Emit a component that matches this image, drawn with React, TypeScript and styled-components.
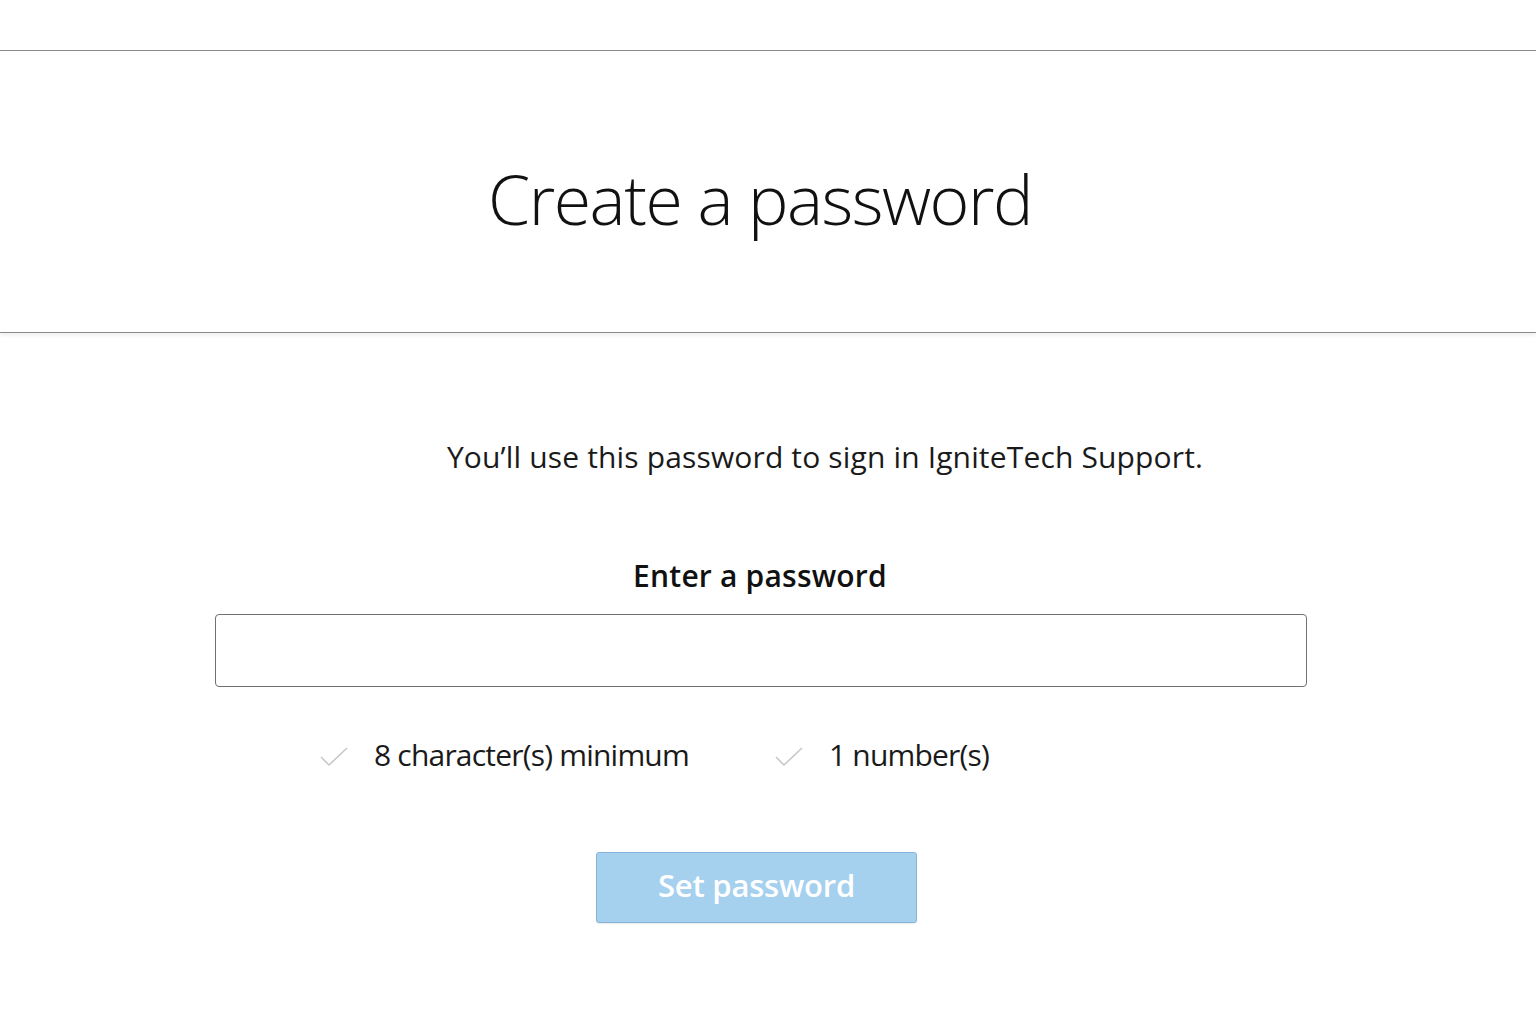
import React from "react";
import styled, { createGlobalStyle } from "styled-components";

const Global = createGlobalStyle`
  html, body { margin: 0; padding: 0; background: #ffffff; }
  body { font-family: "Open Sans", "Lato", sans-serif; color: #111; }
`;

const Page = styled.div`
  width: 1536px;
  min-height: 1024px;
  display: flex;
  flex-direction: column;
  align-items: stretch;
`;

const TopBar = styled.div`
  height: 50px;
  border-bottom: 1px solid #8a8a8a;
`;

const Hero = styled.header`
  height: 282px;
  border-bottom: 1px solid #8a8a8a;
  box-shadow: 0 3px 3px rgba(0, 0, 0, 0.05);
  display: flex;
  align-items: center;
  justify-content: center;
  box-sizing: border-box;
  padding-right: 16px;
`;

const Title = styled.h1`
  margin: 0;
  padding-top: 14px;
  font-family: "Open Sans", sans-serif;
  font-weight: 300;
  font-size: 68px;
  letter-spacing: -1.5px;
  color: #111;
`;

const Main = styled.main`
  display: flex;
  flex-direction: column;
  align-items: center;
  padding-top: 102px;
  padding-right: 16px;
`;

const Intro = styled.p`
  margin: 0 0 0 130px;
  font-size: 30px;
  letter-spacing: 0.15px;
  color: #1a1a1a;
  line-height: 44px;
`;

const Label = styled.label`
  margin-top: 77px;
  font-size: 30px;
  font-weight: 600;
  letter-spacing: 0.2px;
  line-height: 40px;
  color: #111;
`;

const Input = styled.input`
  margin-top: 18px;
  margin-left: 2px;
  width: 1092px;
  height: 73px;
  box-sizing: border-box;
  border: 1px solid #707070;
  border-radius: 4px;
  background: #fff;
  font-size: 28px;
  padding: 0 16px;
  outline: none;
`;

const Rules = styled.ul`
  list-style: none;
  align-self: flex-start;
  margin: 46px 0 0 320px;
  padding: 0;
  display: flex;
  gap: 86px;
`;

const Rule = styled.li`
  display: flex;
  align-items: center;
  gap: 26px;
  font-size: 30px;
  letter-spacing: -0.8px;
  color: #1a1a1a;
  line-height: 44px;
`;

const Check = styled.svg`
  width: 28px;
  height: 20px;
  flex: none;
  margin-top: 4px;
`;

const Button = styled.button`
  margin-top: 75px;
  margin-right: 7px;
  width: 321px;
  height: 71px;
  box-sizing: border-box;
  padding: 0 0 6px 0;
  border: 1px solid #86b4da;
  border-radius: 3px;
  background: #a5d1ef;
  color: #ffffff;
  font-family: "Open Sans", sans-serif;
  font-size: 31px;
  font-weight: 600;
  letter-spacing: -0.2px;
  cursor: default;
  box-shadow: 0 1px 1px rgba(0, 0, 0, 0.08);
`;

const CheckIcon = () => (
  <Check viewBox="0 0 28 20" fill="none">
    <polyline points="1,10 9,18 27,1" stroke="#c8c8c8" strokeWidth="1.6" fill="none" />
  </Check>
);

export default function App() {
  return (
    <>
      <Global />
      <Page>
        <TopBar />
        <Hero>
          <Title>Create a password</Title>
        </Hero>
        <Main>
          <Intro>You’ll use this password to sign in IgniteTech Support.</Intro>
          <Label htmlFor="pw">Enter a password</Label>
          <Input id="pw" type="password" />
          <Rules>
            <Rule>
              <CheckIcon />
              8 character(s) minimum
            </Rule>
            <Rule>
              <CheckIcon />
              1 number(s)
            </Rule>
          </Rules>
          <Button type="button">Set password</Button>
        </Main>
      </Page>
    </>
  );
}
